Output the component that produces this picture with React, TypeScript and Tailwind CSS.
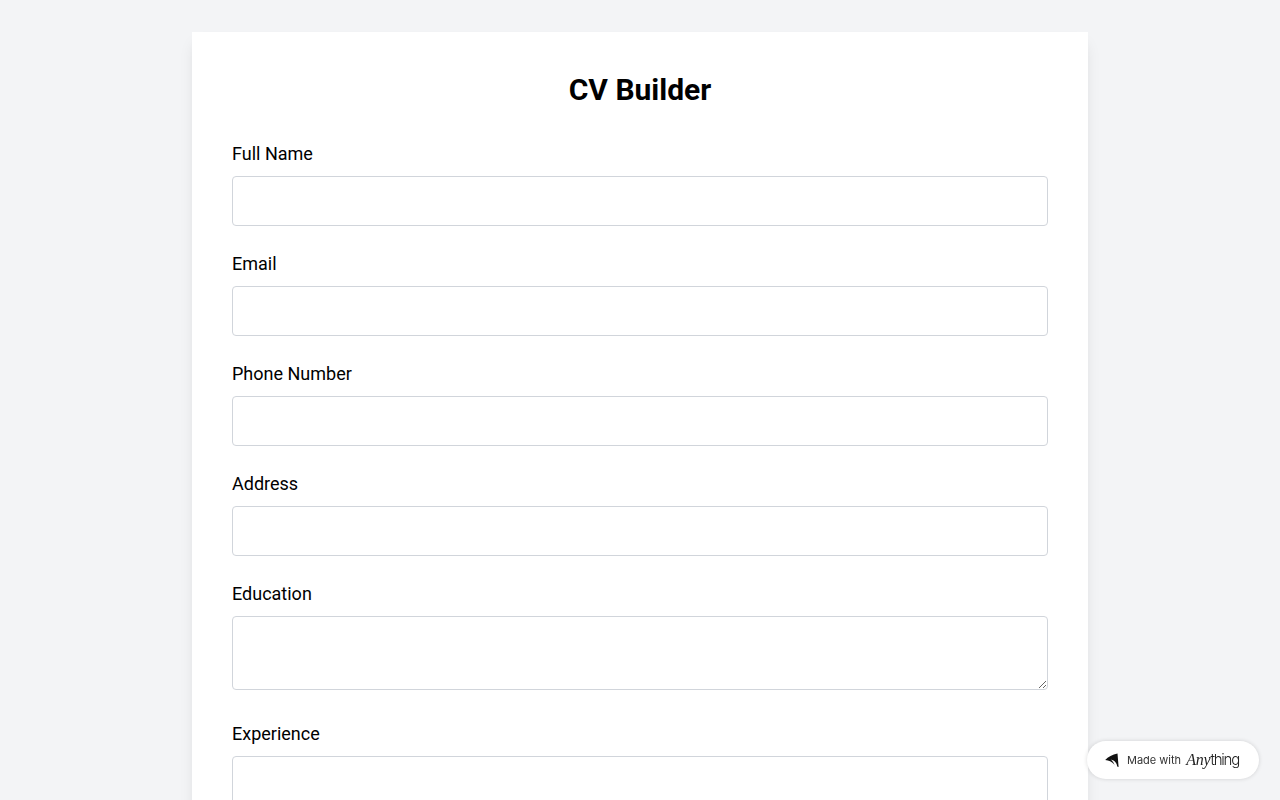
const Field = ({ label, type = "text" }: { label: string; type?: string }) => (
  <div className="mb-6">
    <label className="block text-lg mb-2">{label}</label>
    <input type={type} className="w-full p-3 border border-[#d1d5db] rounded bg-white" />
  </div>
);

const AreaField = ({ label }: { label: string }) => (
  <div className="mb-[30px]">
    <label className="block text-lg mb-2">{label}</label>
    <textarea className="block w-full p-3 border border-[#d1d5db] rounded bg-white"></textarea>
  </div>
);

const App = () => {
  return (
    <div className="min-h-screen bg-[#f3f4f6] py-8 font-['Roboto',sans-serif] text-black">
      <div className="max-w-4xl mx-auto bg-white p-10 shadow-lg">
        <h1 className="text-3xl font-bold text-center mb-8">CV Builder</h1>
        <Field label="Full Name" />
        <Field label="Email" type="email" />
        <Field label="Phone Number" type="tel" />
        <Field label="Address" />
        <AreaField label="Education" />
        <AreaField label="Experience" />
        <AreaField label="Skills" />
      </div>

      {/* Made with badge */}
      <div className="fixed right-[21px] bottom-[21px] w-[172px] h-[38px] flex items-center pl-[18px] bg-white rounded-full shadow-[0_0_4px_rgba(0,0,0,0.15)]">
        <svg width="14" height="14" viewBox="0 0 14 14" className="shrink-0">
          <path d="M0.2 7 C3 3.8 7.5 1.4 12.5 0.4 L13.6 14 L12.2 13.6 C12 10.4 10 7.4 5.6 6.4 C6.8 7.4 8.6 8.6 9.6 12.4 L8.8 11 C6.8 8.8 4 7.4 0.2 7 Z" fill="#111" />
        </svg>
        <span className="ml-2 text-[11px] text-[#333] font-['Inter',sans-serif] whitespace-nowrap">Made with</span>
        <span className="ml-[5px] flex items-baseline text-[#222] whitespace-nowrap">
          <span className="font-['Liberation_Serif',serif] italic text-[16px] tracking-[-0.2px]">Any</span>
          <span className="font-['Inter',sans-serif] font-light text-[15px] tracking-[-1.2px]">thing</span>
        </span>
      </div>
    </div>
  );
};

export default App;
